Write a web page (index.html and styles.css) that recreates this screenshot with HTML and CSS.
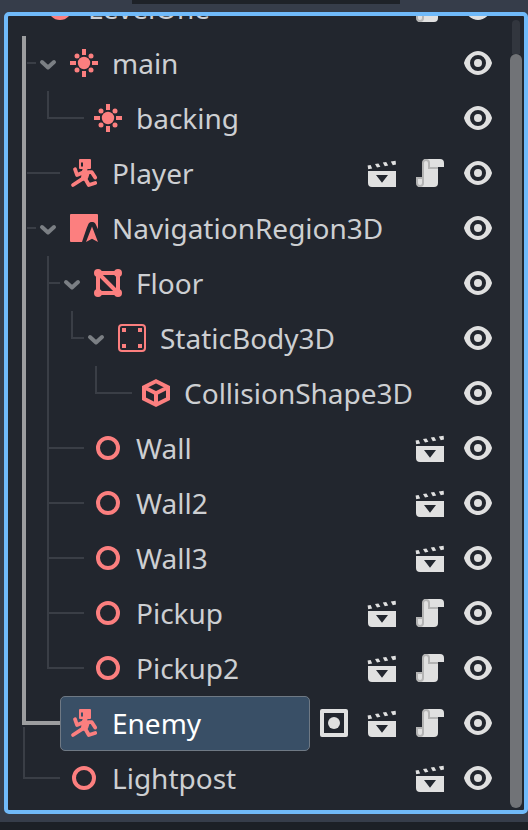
FILE: index.html
```html
<!DOCTYPE html>
<html lang="en">
<head>
<meta charset="utf-8">
<title>Scene</title>
<link rel="stylesheet" href="styles.css">
</head>
<body>
<svg class="sprites" aria-hidden="true">
  <symbol id="eye" viewBox="0 0 16 16"><path fill="#e0e0e0" fill-rule="evenodd" d="M8 2C5.443 2 2.209 3.948 1.045 7.705a1 1 0 0 0 0 .586C2.163 12.03 5.443 14 8 14s5.836-1.97 6.955-5.71a1 1 0 0 0 0-.586C13.861 4.024 10.557 2 8 2zm0 2a4 4 0 0 1 0 8 4 4 0 0 1 0-8zm0 2a2 2 0 0 0 0 4 2 2 0 0 0 0-4z"/></symbol>
  <symbol id="script" viewBox="0 0 16 16"><path fill="#e0e0e0" d="M6 1a1.500 1.500 0 0 0-1.500 2v7.500h-3V13A1.500 1.500 0 0 0 3 15h7a2 2 0 0 0 2-2V5h3V3a2 2 0 0 0-2-2z"/><path fill="#b4b4b4" fill-rule="evenodd" d="M6 1a2 2 0 0 0-2 2v7H1v3a2 2 0 0 0 4 0V3a1 1 0 0 1 2 0v3h5V5H8V3a2 2 0 0 0-2-2zM2 11h2v2a1 1 0 0 1-2 0z"/></symbol>
  <symbol id="scene" viewBox="0 0 16 16"><path fill="#e0e0e0" fill-rule="evenodd" d="M.8 4.300 2.300 4l.8 1.700-2 .4zM4.500 3.500l1.700-.3 1 1.700-1.700.4zM8.400 2.800l1.700-.3 1 1.800-1.700.3zM12.400 2.300l2.400-.4.2 1.900-1.600.3zM1 7h14v8H3a2 2 0 0 1-2-2zm4 2 3 3.900L11 9z"/></symbol>
  <symbol id="group" viewBox="0 0 16 16"><rect x="2" y="2" width="12" height="12" fill="none" stroke="#e0e0e0" stroke-width="2" stroke-linejoin="round"/><circle cx="8" cy="8" r="3" fill="#e0e0e0"/></symbol>
  <symbol id="chevron" viewBox="0 0 24 24"><path d="M6 11l6 5.500 6-5.500" fill="none" stroke="#7b7f84" stroke-width="4" stroke-linecap="round" stroke-linejoin="round"/></symbol>
  <symbol id="node" viewBox="0 0 16 16"><circle cx="8" cy="8" r="5" fill="none" stroke="#fc7f7f" stroke-width="2"/></symbol>
  <symbol id="light" viewBox="0 0 16 16"><g fill="#fc7f7f"><circle cx="8" cy="8" r="3.100"/><path d="M7 1h2v3H7zM7 12h2v3H7zM1 7h3v2H1zM12 7h3v2h-3z"/><circle cx="4.500" cy="4.500" r="1.250"/><circle cx="11.500" cy="4.500" r="1.250"/><circle cx="4.500" cy="11.500" r="1.250"/><circle cx="11.500" cy="11.500" r="1.250"/></g></symbol>
  <symbol id="body" viewBox="0 0 16 16"><path fill="#fc7f7f" fill-rule="evenodd" d="M6 1h5a.5.5 0 0 1 .5.500v4a.5.5 0 0 1-.5.500H6a.5.5 0 0 1-.5-.500v-4A.5.5 0 0 1 6 1zm.5 1.800v2h1v-2z"/><path fill="#fc7f7f" d="M7.500 5.500h2.200v1.300l1.500.2-1.200 3.800-2 1.200-1.500-1.300.3-3.200z"/><path fill="none" stroke="#fc7f7f" stroke-width="1.900" stroke-linecap="round" stroke-linejoin="round" d="M3.500 6.100l1 2.900 3-1.300M10.500 7.600h1.400l1.700 2.700M7.400 10.800 2.500 14M8.700 11l1.700 3 3.200-1"/></symbol>
  <symbol id="nav" viewBox="0 0 16 16"><path fill="#fc7f7f" d="M1.500 1h13a.5.5 0 0 1 .5.500V8.600l-1.100-2.400C13.500 5.300 12.800 5 12 5s-1.500.3-1.900 1.200C9 8.700 8 12 7 15H1.500a.5.5 0 0 1-.5-.500v-13A.5.5 0 0 1 1.500 1zM12 7.300 15 15l-3-1.600L9 15z"/></symbol>
  <symbol id="mesh" viewBox="0 0 16 16"><path d="M3 3h10v10H3zl10 10" fill="none" stroke="#fc7f7f" stroke-width="2"/><g fill="#fc7f7f"><circle cx="3" cy="3" r="2"/><circle cx="13" cy="3" r="2"/><circle cx="3" cy="13" r="2"/><circle cx="13" cy="13" r="2"/></g></symbol>
  <symbol id="static" viewBox="0 0 16 16"><rect x="1.500" y="1.500" width="13" height="13" rx="1.500" fill="none" stroke="#fc7f7f"/><path fill="#fc7f7f" d="M3 3h2v2H3zM11 3h2v2h-2zM3 11h2v2H3zM11 11h2v2h-2z"/></symbol>
  <symbol id="shape" viewBox="0 0 16 16"><path d="M8 2.100 14 5.100v5.800l-6 3-6-3V5.100zM2 5.100l6 3 6-3M8 8v6" fill="none" stroke="#fc7f7f" stroke-width="2"/></symbol>
</svg>

<div class="tabs"><div class="tab"></div></div>

<main class="panel">
  <ul class="tree">
    <li class="row root">
      <div class="item"><svg class="icon"><use href="#node"/></svg><span>LevelOne</span></div>
      <button aria-label="Open script"><svg class="icon"><use href="#script"/></svg></button>
      <button aria-label="Toggle visibility"><svg class="icon"><use href="#eye"/></svg></button>
    </li>
    <li class="row">
      <i class="trunk branch stub"></i><button class="fold" aria-label="Collapse"><svg><use href="#chevron"/></svg></button>
      <div class="item"><svg class="icon"><use href="#light"/></svg><span>main</span></div>
      <button aria-label="Toggle visibility"><svg class="icon"><use href="#eye"/></svg></button>
    </li>
    <li class="row">
      <i class="trunk"></i><i class="elbow"></i>
      <div class="item"><svg class="icon"><use href="#light"/></svg><span>backing</span></div>
      <button aria-label="Toggle visibility"><svg class="icon"><use href="#eye"/></svg></button>
    </li>
    <li class="row">
      <i class="trunk branch"></i>
      <div class="item"><svg class="icon"><use href="#body"/></svg><span>Player</span></div>
      <button aria-label="Open scene"><svg class="icon"><use href="#scene"/></svg></button>
      <button aria-label="Open script"><svg class="icon"><use href="#script"/></svg></button>
      <button aria-label="Toggle visibility"><svg class="icon"><use href="#eye"/></svg></button>
    </li>
    <li class="row">
      <i class="trunk branch stub"></i><button class="fold" aria-label="Collapse"><svg><use href="#chevron"/></svg></button>
      <div class="item"><svg class="icon"><use href="#nav"/></svg><span>NavigationRegion3D</span></div>
      <button aria-label="Toggle visibility"><svg class="icon"><use href="#eye"/></svg></button>
    </li>
    <li class="row">
      <i class="trunk"></i><i class="tee stub"></i><button class="fold" aria-label="Collapse"><svg><use href="#chevron"/></svg></button>
      <div class="item"><svg class="icon"><use href="#mesh"/></svg><span>Floor</span></div>
      <button aria-label="Toggle visibility"><svg class="icon"><use href="#eye"/></svg></button>
    </li>
    <li class="row">
      <i class="trunk"></i><i class="line"></i><i class="elbow stub"></i><button class="fold" aria-label="Collapse"><svg><use href="#chevron"/></svg></button>
      <div class="item"><svg class="icon"><use href="#static"/></svg><span>StaticBody3D</span></div>
      <button aria-label="Toggle visibility"><svg class="icon"><use href="#eye"/></svg></button>
    </li>
    <li class="row">
      <i class="trunk"></i><i class="line"></i><i class="blank"></i><i class="elbow"></i>
      <div class="item"><svg class="icon"><use href="#shape"/></svg><span>CollisionShape3D</span></div>
      <button aria-label="Toggle visibility"><svg class="icon"><use href="#eye"/></svg></button>
    </li>
    <li class="row">
      <i class="trunk"></i><i class="tee"></i>
      <div class="item"><svg class="icon"><use href="#node"/></svg><span>Wall</span></div>
      <button aria-label="Open scene"><svg class="icon"><use href="#scene"/></svg></button>
      <button aria-label="Toggle visibility"><svg class="icon"><use href="#eye"/></svg></button>
    </li>
    <li class="row">
      <i class="trunk"></i><i class="tee"></i>
      <div class="item"><svg class="icon"><use href="#node"/></svg><span>Wall2</span></div>
      <button aria-label="Open scene"><svg class="icon"><use href="#scene"/></svg></button>
      <button aria-label="Toggle visibility"><svg class="icon"><use href="#eye"/></svg></button>
    </li>
    <li class="row">
      <i class="trunk"></i><i class="tee"></i>
      <div class="item"><svg class="icon"><use href="#node"/></svg><span>Wall3</span></div>
      <button aria-label="Open scene"><svg class="icon"><use href="#scene"/></svg></button>
      <button aria-label="Toggle visibility"><svg class="icon"><use href="#eye"/></svg></button>
    </li>
    <li class="row">
      <i class="trunk"></i><i class="tee"></i>
      <div class="item"><svg class="icon"><use href="#node"/></svg><span>Pickup</span></div>
      <button aria-label="Open scene"><svg class="icon"><use href="#scene"/></svg></button>
      <button aria-label="Open script"><svg class="icon"><use href="#script"/></svg></button>
      <button aria-label="Toggle visibility"><svg class="icon"><use href="#eye"/></svg></button>
    </li>
    <li class="row">
      <i class="trunk"></i><i class="elbow"></i>
      <div class="item"><svg class="icon"><use href="#node"/></svg><span>Pickup2</span></div>
      <button aria-label="Open scene"><svg class="icon"><use href="#scene"/></svg></button>
      <button aria-label="Open script"><svg class="icon"><use href="#script"/></svg></button>
      <button aria-label="Toggle visibility"><svg class="icon"><use href="#eye"/></svg></button>
    </li>
    <li class="row">
      <i class="trunk-end"></i>
      <div class="item selected"><svg class="icon"><use href="#body"/></svg><span>Enemy</span></div>
      <button aria-label="Groups"><svg class="icon"><use href="#group"/></svg></button>
      <button aria-label="Open scene"><svg class="icon"><use href="#scene"/></svg></button>
      <button aria-label="Open script"><svg class="icon"><use href="#script"/></svg></button>
      <button aria-label="Toggle visibility"><svg class="icon"><use href="#eye"/></svg></button>
    </li>
    <li class="row">
      <i class="elbow"></i>
      <div class="item"><svg class="icon"><use href="#node"/></svg><span>Lightpost</span></div>
      <button aria-label="Open scene"><svg class="icon"><use href="#scene"/></svg></button>
      <button aria-label="Toggle visibility"><svg class="icon"><use href="#eye"/></svg></button>
    </li>
  </ul>
  <div class="scrollbar"><div class="track"></div><div class="grabber"></div></div>
</main>

<div class="dock-edge"></div>
</body>
</html>
```
FILE: styles.css
```css
* {
  box-sizing: border-box;
}

:root {
  --guide: linear-gradient(#3a3e46, #3a3e46);
  --bright: linear-gradient(#9c9d9f, #9c9d9f);
}

body {
  margin: 0;
  min-height: 100vh;
  display: flex;
  flex-direction: column;
  background: #363d4a;
  color: #cdcfd2;
  font-family: "Noto Sans", sans-serif;
  font-size: 28px;
  line-height: 40px;
}

.sprites {
  display: none;
}

.tabs {
  height: 12px;
  padding: 0 128px 0 132px;
}

.tab {
  height: 4px;
  background: #1e2228;
}

.panel {
  flex: 1;
  display: flex;
  margin-left: 4px;
  padding-bottom: 4px;
  border: 4px solid #70bafa;
  border-radius: 5px;
  background: #22262e;
  overflow: hidden;
}

.tree {
  flex: 1;
  min-width: 0;
  margin: -35px 0 0;
  padding: 0 16px 0 14px;
  list-style: none;
}

.row {
  display: flex;
  height: 55px;
}

.root {
  padding-left: 14px;
}

.item {
  flex: 1;
  min-width: 0;
  display: flex;
  align-items: center;
  gap: 12px;
  padding: 0 7px 1px;
  border: 1px solid transparent;
  border-radius: 5px;
  white-space: nowrap;
}

.selected {
  background: #394f66;
  border-color: #6f7984;
  color: #fff;
}

.icon {
  display: block;
  flex: none;
  width: 32px;
  height: 32px;
}

button {
  flex: none;
  display: flex;
  align-items: center;
  margin: 0 0 0 16px;
  padding: 0 0 1px;
  border: 0;
  background: none;
}

.item + button {
  margin-left: 8px;
}

.row .fold {
  margin: 0;
}

.fold svg {
  display: block;
  width: 24px;
  height: 24px;
}

/* Guide cells: one per depth level, the last one leads to the item. */
.row i {
  flex: none;
  width: 24px;
  background-repeat: no-repeat;
}

.row .branch,
.row .tee,
.row .elbow,
.row .trunk-end {
  width: 38px;
}

.row .stub {
  width: 14px;
}

.trunk {
  background-image: var(--bright);
  background-size: 4px 100%;
}

.branch {
  background-image: var(--bright), var(--guide);
  background-size: 4px 100%, 100% 2px;
  background-position: 0 0, 5px 26px;
}

.line {
  background-image: var(--guide);
  background-size: 2px 100%;
  background-position: 1px 0;
}

.tee {
  background-image: var(--guide), var(--guide);
  background-size: 2px 100%, 100% 2px;
  background-position: 1px 0, 1px 26px;
}

.elbow {
  background-image: var(--guide), var(--guide);
  background-size: 2px 28px, 100% 2px;
  background-position: 1px 0, 1px 26px;
}

.trunk-end {
  background-image: var(--bright), var(--bright), var(--guide);
  background-size: 4px 29px, 100% 4px, 2px 24px;
  background-position: 0 0, 0 25px, 1px 31px;
}

.scrollbar {
  display: flex;
  flex-direction: column;
  align-items: center;
  width: 12px;
  margin: 4px 2px -2px 0;
}

.track {
  width: 8px;
  height: 34px;
  border-radius: 4px 4px 0 0;
  background: #32363e;
}

.grabber {
  flex: 1;
  width: 12px;
  border-radius: 6px;
  background: #717377;
}

.dock-edge {
  height: 8px;
  margin-top: 8px;
  background: #1c2026;
}
```
